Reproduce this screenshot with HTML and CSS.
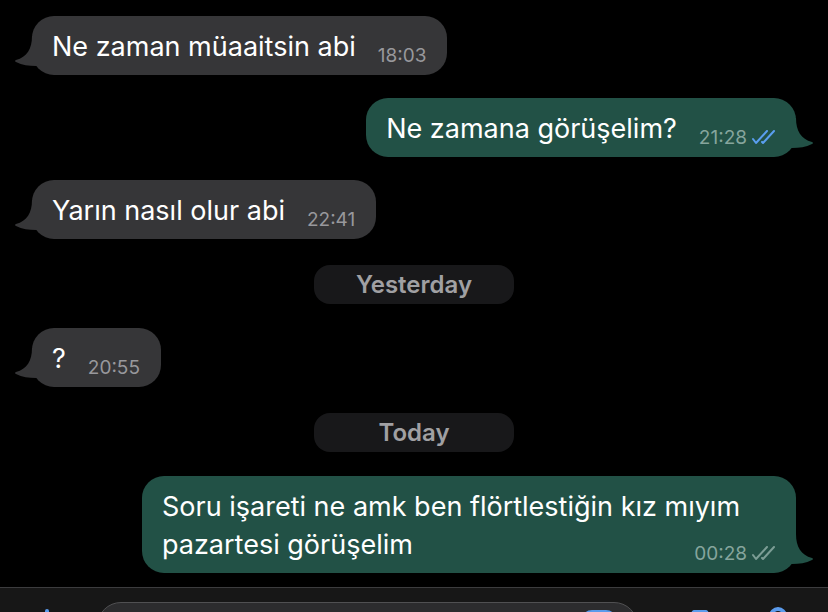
FILE: index.html
```html
<!DOCTYPE html>
<html lang="tr">
<head>
    <meta charset="UTF-8">
    <meta name="viewport" content="width=device-width, initial-scale=1.0">
    <title>Chat</title>
    <link rel="stylesheet" href="styles.css">
</head>
<body>

    <main class="chat">
        <div class="message in">
            <svg class="tail" viewBox="0 0 30 32"><path d="M17 0C17 13 12 21 1 24Q-1 25 1 26C7 29 14 30 21 30H30V0Z"/></svg>
            <p>Ne zaman müaaitsin abi</p>
            <div class="meta"><time>18:03</time></div>
        </div>

        <div class="message out">
            <svg class="tail" viewBox="0 0 30 32"><path d="M17 0C17 13 12 21 1 24Q-1 25 1 26C7 29 14 30 21 30H30V0Z"/></svg>
            <p>Ne zamana görüşelim?</p>
            <div class="meta">
                <time>21:28</time>
                <svg class="ticks read" viewBox="0 0 23 16"><path d="M1 9L4 13L15 1M10 12L11 13L22 1"/></svg>
            </div>
        </div>

        <div class="message in">
            <svg class="tail" viewBox="0 0 30 32"><path d="M17 0C17 13 12 21 1 24Q-1 25 1 26C7 29 14 30 21 30H30V0Z"/></svg>
            <p>Yarın nasıl olur abi</p>
            <div class="meta"><time>22:41</time></div>
        </div>

        <div class="day">Yesterday</div>

        <div class="message in">
            <svg class="tail" viewBox="0 0 30 32"><path d="M17 0C17 13 12 21 1 24Q-1 25 1 26C7 29 14 30 21 30H30V0Z"/></svg>
            <p>?</p>
            <div class="meta"><time>20:55</time></div>
        </div>

        <div class="day">Today</div>

        <div class="message out long">
            <svg class="tail" viewBox="0 0 30 32"><path d="M17 0C17 13 12 21 1 24Q-1 25 1 26C7 29 14 30 21 30H30V0Z"/></svg>
            <p>Soru işareti ne amk ben flörtlestiğin kız mıyım pazartesi görüşelim</p>
            <div class="meta">
                <time>00:28</time>
                <svg class="ticks" viewBox="0 0 23 16"><path d="M1 9L4 13L15 1M10 12L11 13L22 1"/></svg>
            </div>
        </div>
    </main>

    <footer class="composer">
        <button type="button" aria-label="Attach">
            <svg viewBox="0 0 36 36"><path d="M18 6V34M4 20H32"/></svg>
        </button>
        <div class="field">
            <input type="text" aria-label="Message">
            <button type="button" aria-label="Stickers">
                <svg viewBox="0 0 36 36"><path d="M11 3H25Q32 3 32 11V20L20 32H11Q4 32 4 25V11Q4 3 11 3ZM20 32V26Q20 20 26 20H32"/></svg>
            </button>
        </div>
        <button type="button" aria-label="Camera">
            <svg viewBox="0 0 36 36"><path d="M12 7H24L27 11H31Q34 11 34 14V30Q34 33 31 33H5Q2 33 2 30V14Q2 11 5 11H9Z"/><circle cx="18" cy="21" r="7"/></svg>
        </button>
        <button type="button" aria-label="Voice message">
            <svg viewBox="0 0 36 36"><path d="M11 11a7 7 0 0 1 14 0v8a7 7 0 0 1-14 0ZM5 19a13 12 0 0 0 26 0M18 31V34"/></svg>
        </button>
    </footer>

</body>
</html>
```
FILE: styles.css
```css
* {
    box-sizing: border-box;
}

body {
    margin: 0;
    height: 100vh;
    overflow: hidden;
    display: flex;
    flex-direction: column;
    background-color: #000;
    color: #fff;
    font-family: Inter, "Noto Sans", sans-serif;
}

.chat {
    flex: none;
    display: flex;
    flex-direction: column;
    gap: 23px;
    padding: 16px 32px 14px;
}

.message {
    position: relative;
    display: flex;
    align-items: flex-end;
    gap: 22px;
    max-width: 654px;
    padding: 12px 21px 9px 20px;
    border-radius: 22px;
    font-size: 27px;
    line-height: 38px;
}

.message p {
    margin: 0;
}

.in {
    align-self: flex-start;
    background-color: #363638;
    color: #fff;
}

.out {
    align-self: flex-end;
    background-color: #225146;
}

/* the time floats at the end of the last line */
.long {
    display: flow-root;
}

.long p {
    display: inline;
}

.long .meta {
    float: right;
    margin-top: 18px;
}

.tail {
    position: absolute;
    bottom: 7px;
    left: -17px;
    width: 30px;
    height: 32px;
    fill: #363638;
}

.out .tail {
    left: auto;
    right: -17px;
    transform: scaleX(-1);
    fill: #225146;
}

.meta {
    display: flex;
    align-items: center;
    gap: 5px;
    color: #98989c;
    font-size: 19px;
    line-height: 20px;
}

.out .meta {
    color: #86a59d;
}

.ticks {
    width: 23px;
    height: 16px;
    fill: none;
    stroke: #7c9d95;
    stroke-width: 2;
    stroke-linecap: round;
    stroke-linejoin: round;
}

.read {
    stroke: #5a9eef;
}

.day {
    align-self: center;
    width: 200px;
    margin: 3px 0 1px;
    border-radius: 16px;
    background-color: #18181a;
    color: #a0a0a3;
    font-size: 24px;
    font-weight: 600;
    line-height: 39px;
    text-align: center;
}

.composer {
    flex: none;
    display: flex;
    align-items: flex-start;
    gap: 42px;
    padding: 14px 32px 14px 29px;
    border-top: 1px solid #3c3c3e;
    background-color: #171717;
}

.composer button {
    padding: 0;
    border: none;
    background: none;
    margin-top: 3px;
}

.composer svg {
    display: block;
    width: 36px;
    height: 36px;
    fill: none;
    stroke: #5b9bec;
    stroke-width: 4;
    stroke-linecap: round;
    stroke-linejoin: round;
}

.field {
    flex: 1;
    display: flex;
    align-items: flex-start;
    margin: 0 2px 0 -10px;
    padding-right: 20px;
    border: 1px solid #505052;
    border-radius: 24px;
    background-color: #2c2c2e;
}

.field input {
    flex: 1;
    min-width: 0;
    height: 64px;
    padding: 0 24px;
    border: none;
    outline: none;
    background: none;
    color: #fff;
    font: inherit;
    font-size: 27px;
}

.field button {
    margin-top: 6px;
}
```
